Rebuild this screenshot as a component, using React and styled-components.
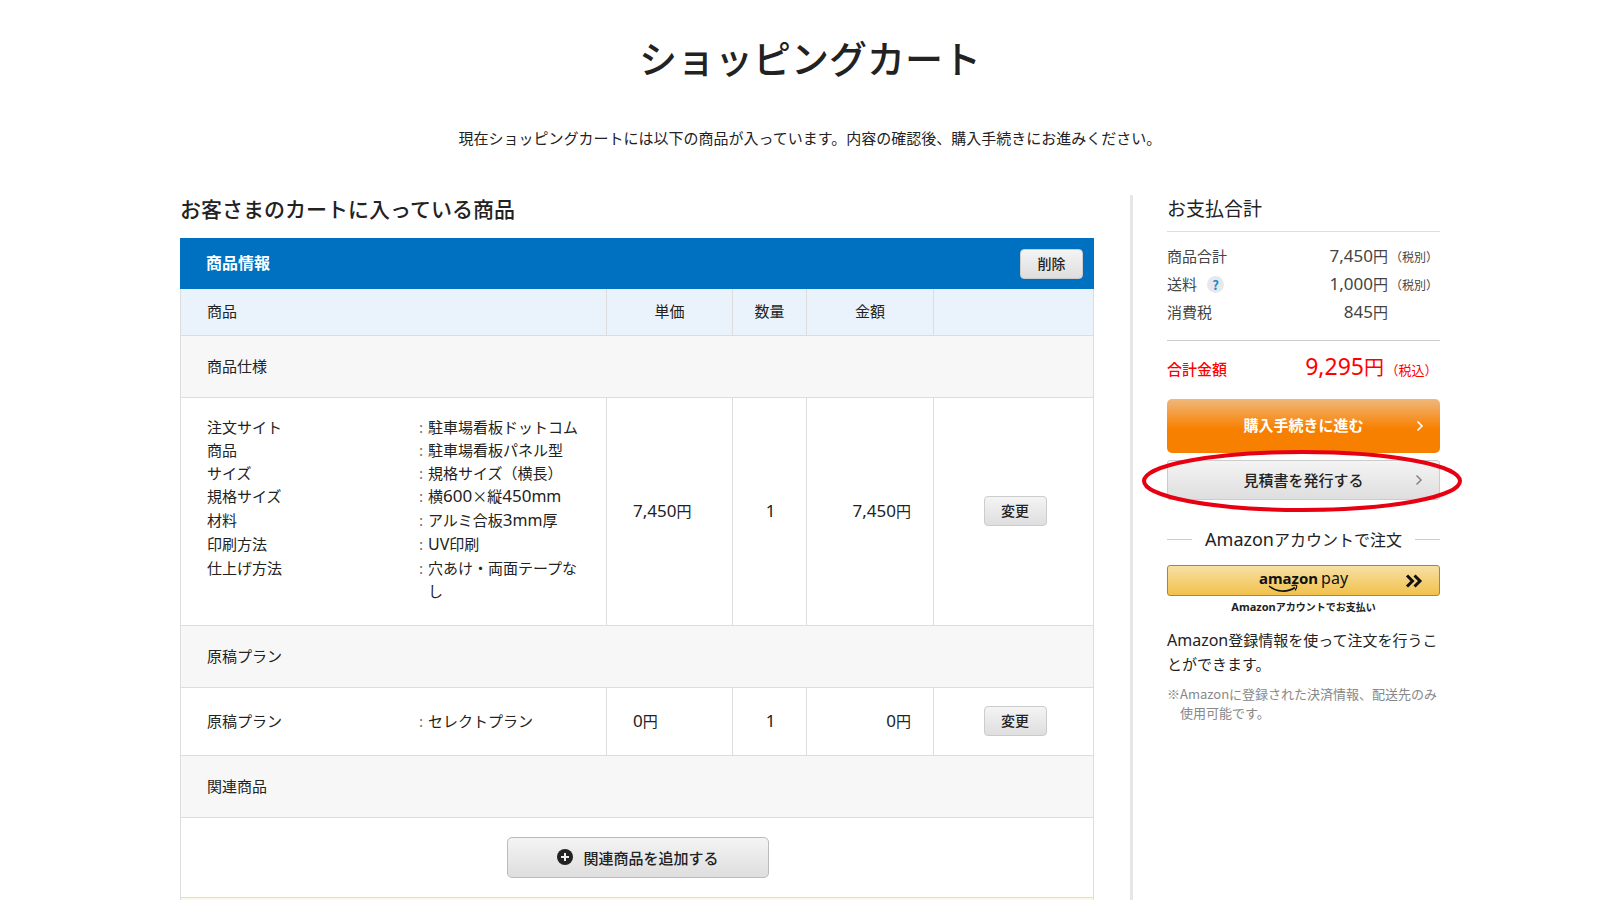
import React from 'react'
import styled, { createGlobalStyle, css } from 'styled-components'

const GlobalStyle = createGlobalStyle`
  * {
    box-sizing: border-box;
  }
  body {
    margin: 0;
    background: #fff;
    color: #222;
    font-family: "Noto Sans CJK JP", "Noto Sans", sans-serif;
    font-size: 15px;
    line-height: 23px;
  }
  h1, h2, h3, p, dl, dd {
    margin: 0;
    font-weight: 400;
  }
  button {
    font-family: inherit;
    cursor: pointer;
  }
`

const Page = styled.div`
  min-height: 100vh;
  display: flex;
  flex-direction: column;
  padding: 30px 160px 0 180px;
`
const Title = styled.h1`
  font-size: 38px;
  line-height: 54px;
  font-weight: 500;
  text-align: center;
`
const Lead = styled.p`
  margin-top: 42px;
  line-height: 24px;
  text-align: center;
`
const Columns = styled.div`
  flex: 1;
  display: flex;
  gap: 36px;
  margin-top: 45px;
`
const Main = styled.main`
  flex: 1;
  display: flex;
  flex-direction: column;
`
const Heading = styled.h2`
  font-size: 21px;
  line-height: 26px;
  font-weight: 500;
  margin-bottom: 17px;
`
const TableBar = styled.div`
  height: 51px;
  display: flex;
  align-items: center;
  justify-content: space-between;
  padding: 0 11px 0 26px;
  background: #0070c0;
`
const BarLabel = styled.strong`
  padding-bottom: 3px;
  color: #fff;
  font-size: 16px;
  font-weight: 700;
`

const Digits = styled.span`
  font-family: "Noto Sans", sans-serif;
  font-size: ${(p) => p.$size || 17}px;
`
const Letters = styled.span`
  font-family: "Noto Sans", sans-serif;
  font-size: ${(p) => p.$size || 16}px;
`

const grey = css`
  border: 1px solid #ccc;
  background: linear-gradient(#f4f4f4, #dedede);
  color: #222;
`
const SmallButton = styled.button`
  ${grey}
  width: 63px;
  height: 30px;
  padding: 0 0 2px;
  border-radius: 4px;
  font-size: 14px;
  font-weight: 500;
`
const AddButton = styled.button`
  ${grey}
  border-color: #bbb;
  display: inline-flex;
  align-items: center;
  justify-content: center;
  gap: 10px;
  width: 262px;
  height: 41px;
  border-radius: 5px;
  font-size: 15px;
  font-weight: 500;
  vertical-align: middle;
`

const Table = styled.table`
  width: 100%;
  table-layout: fixed;
  border-collapse: collapse;
`
const Col = styled.col`
  width: ${(p) => p.$w}px;
`
const Th = styled.th`
  height: 46px;
  padding: 0 0 2px;
  padding-left: ${(p) => (p.$first ? 26 : 0)}px;
  text-align: ${(p) => (p.$first ? 'left' : 'center')};
  font-weight: 400;
  background: #eaf3fb;
  border: 1px solid #ddd;
  border-top: none;
`
const SectionTh = styled.th`
  height: 62px;
  padding: 0 26px 2px;
  text-align: left;
  font-weight: 400;
  background: #f7f7f7;
  border: 1px solid #ddd;
`
const Td = styled.td`
  height: ${(p) => p.$h || 68}px;
  padding: ${(p) => (p.$align === 'center' ? '0 23px 2px 25px' : '0 22px 2px 26px')};
  border: 1px solid #ddd;
  text-align: ${(p) => p.$align || 'left'};
`
const ActionTd = styled(Td)`
  padding: 0 0 0 3px;
  text-align: center;
`
const AddTd = styled(Td)`
  padding: 0 22px 0 24px;
  text-align: center;
`
const Spec = styled.dl`
  display: grid;
  grid-template-columns: 212px 9px 1fr;
  padding-bottom: ${(p) => (p.$long ? 3 : 0)}px;
`
const Colon = styled.span`
  color: #777;
`
const Notice = styled.div`
  flex: 1;
  background: #fcfae6;
  border: 1px solid #ddd;
  border-top: none;
  border-bottom: none;
`

const Aside = styled.aside`
  width: 310px;
  padding-left: 34px;
  border-left: 3px solid #e6e6e6;
`
const AsideHeading = styled.h3`
  padding-bottom: 10px;
  font-size: 19px;
  line-height: 26px;
  border-bottom: 1px solid #ddd;
`
const Sums = styled.dl`
  padding: 10px 0 14px;
  border-bottom: 1px solid #ccc;
`
const SumRow = styled.div`
  display: flex;
  height: 28px;
  line-height: 28px;
  color: #444;
`
const SumLabel = styled.dt`
  flex: 1;
  display: flex;
  align-items: center;
  gap: 10px;
`
const TaxNote = styled.span`
  display: inline-block;
  width: ${(p) => p.$w}px;
  padding-left: 8px;
  font-size: ${(p) => p.$size}px;
  font-feature-settings: "halt";
  text-align: left;
`
const Help = styled.button`
  width: 17px;
  height: 17px;
  padding: 0;
  border: none;
  border-radius: 50%;
  background: #e6e8ea;
  color: #1a8ad4;
  font-size: 13px;
  line-height: 17px;
  font-weight: 700;
`
const Total = styled.div`
  display: flex;
  justify-content: space-between;
  align-items: baseline;
  height: 58px;
  padding-top: 10px;
  line-height: 30px;
  color: #f00;
`
const TotalLabel = styled.span`
  font-weight: 500;
`
const TotalValue = styled.span`
  font-size: 20px;
`

const WideButton = styled.button`
  position: relative;
  display: block;
  width: 100%;
  height: 54px;
  padding: 0 0 4px;
  border: none;
  border-radius: 5px;
  background: linear-gradient(#f0b87c, #f88000 55%);
  color: #fff;
  font-size: 15px;
  font-weight: 700;
`
const EstimateButton = styled(WideButton)`
  ${grey}
  height: 40px;
  padding: 0 0 2px;
  border-radius: 3px;
  font-weight: 500;
`
const Arrow = styled.svg`
  position: absolute;
  right: 16px;
  top: 50%;
  transform: translateY(-50%);
`
const Marked = styled.div`
  position: relative;
  margin-top: 7px;
`
const Ring = styled.svg`
  position: absolute;
  left: -26px;
  top: -11px;
  pointer-events: none;
`
const AmazonHeading = styled.h3`
  display: flex;
  align-items: center;
  gap: 13px;
  margin-top: 25px;
  font-size: 16px;
  line-height: 28px;

  &::before, &::after {
    content: "";
    flex: 1;
    height: 1px;
    background: #ccc;
  }
`
const PayButton = styled(WideButton)`
  height: 31px;
  margin-top: 12px;
  padding: 0;
  border: 1px solid #a88734;
  border-radius: 3px;
  background: linear-gradient(#f8dfa5, #f0c14b);
  color: #111;
`
const PayLogo = styled.span`
  display: flex;
  align-items: baseline;
  justify-content: center;
  gap: 3px;
  height: 29px;
  line-height: 24px;
  font-family: "Noto Sans", sans-serif;
`
const PayBrand = styled.span`
  position: relative;
  font-size: 15px;
  font-weight: 700;
`
const PayWord = styled.span`
  font-size: 16px;
  font-weight: 400;
`
const Smile = styled.svg`
  position: absolute;
  left: 9px;
  top: 18px;
`
const PayCaption = styled.p`
  font-size: 10px;
  line-height: 22px;
  font-weight: 700;
  text-align: center;
`
const AmazonText = styled.p`
  margin-top: 10px;
`
const AmazonNote = styled.p`
  margin-top: 9px;
  padding-left: 13px;
  text-indent: -13px;
  font-size: 13px;
  line-height: 19px;
  color: #888;
`

const specs = [
  ['注文サイト', '駐車場看板ドットコム'],
  ['商品', '駐車場看板パネル型'],
  ['サイズ', '規格サイズ（横長）'],
  ['規格サイズ', '横600×縦450mm'],
  ['材料', 'アルミ合板3mm厚'],
  ['印刷方法', 'UV印刷'],
  ['仕上げ方法', '穴あけ・両面テープなし'],
]

const sums = [
  { label: '商品合計', value: '7,450円', note: '（税別）' },
  { label: '送料', value: '1,000円', note: '（税別）', help: true },
  { label: '消費税', value: '845円' },
]

// digits and latin letters are set a little larger than the kana around them
const Mixed = ({ text, digits, letters }) =>
  text.split(/([0-9,]+|[A-Za-z]+)/).map((part, i) => {
    if (/^[0-9,]+$/.test(part)) return <Digits key={i} $size={digits}>{part}</Digits>
    if (/^[A-Za-z]+$/.test(part)) return <Letters key={i} $size={letters}>{part}</Letters>
    return part
  })

const SpecList = ({ items }) => (
  <Spec $long={items.length > 1}>
    {items.map(([name, value]) => (
      <React.Fragment key={name}>
        <dt>{name}</dt>
        <Colon>:</Colon>
        <dd><Mixed text={value} /></dd>
      </React.Fragment>
    ))}
  </Spec>
)

const Chevron = ({ color }) => (
  <Arrow width="8" height="12" viewBox="0 0 8 12" fill="none" stroke={color} strokeWidth="1.6">
    <path d="M1.5 1.5 L6 6 L1.5 10.5" />
  </Arrow>
)

const CartTable = () => (
  <Table>
    <colgroup>
      <col />
      <Col $w={126} />
      <Col $w={74} />
      <Col $w={127} />
      <Col $w={160} />
    </colgroup>
    <thead>
      <tr>
        <Th $first>商品</Th>
        <Th>単価</Th>
        <Th>数量</Th>
        <Th>金額</Th>
        <Th />
      </tr>
    </thead>
    <tbody>
      <tr>
        <SectionTh colSpan={5}>商品仕様</SectionTh>
      </tr>
      <tr>
        <Td $h={228}><SpecList items={specs} /></Td>
        <Td><Mixed text="7,450円" /></Td>
        <Td $align="center"><Mixed text="1" /></Td>
        <Td $align="right"><Mixed text="7,450円" /></Td>
        <ActionTd><SmallButton>変更</SmallButton></ActionTd>
      </tr>
      <tr>
        <SectionTh colSpan={5}>原稿プラン</SectionTh>
      </tr>
      <tr>
        <Td><SpecList items={[['原稿プラン', 'セレクトプラン']]} /></Td>
        <Td><Mixed text="0円" /></Td>
        <Td $align="center"><Mixed text="1" /></Td>
        <Td $align="right"><Mixed text="0円" /></Td>
        <ActionTd><SmallButton>変更</SmallButton></ActionTd>
      </tr>
      <tr>
        <SectionTh colSpan={5}>関連商品</SectionTh>
      </tr>
      <tr>
        <AddTd colSpan={5} $h={80}>
          <AddButton>
            <svg width="16" height="16" viewBox="0 0 16 16">
              <circle cx="8" cy="8" r="8" fill="#222" />
              <path d="M8 4 V12 M4 8 H12" stroke="#eee" strokeWidth="2" />
            </svg>
            関連商品を追加する
          </AddButton>
        </AddTd>
      </tr>
    </tbody>
  </Table>
)

const Payment = () => (
  <Aside>
    <AsideHeading>お支払合計</AsideHeading>
    <Sums>
      {sums.map((s) => (
        <SumRow key={s.label}>
          <SumLabel>
            {s.label}
            {s.help && <Help aria-label="送料について">?</Help>}
          </SumLabel>
          <dd>
            <Mixed text={s.value} />
            <TaxNote $w={52} $size={12}>{s.note}</TaxNote>
          </dd>
        </SumRow>
      ))}
    </Sums>
    <Total>
      <TotalLabel>合計金額</TotalLabel>
      <TotalValue>
        <Mixed text="9,295円" digits={23} />
        <TaxNote $w={56} $size={13}>（税込）</TaxNote>
      </TotalValue>
    </Total>
    <WideButton>
      購入手続きに進む
      <Chevron color="#fff" />
    </WideButton>
    <Marked>
      <EstimateButton>
        見積書を発行する
        <Chevron color="#888" />
      </EstimateButton>
      <Ring width="322" height="64" viewBox="0 0 322 64">
        <ellipse cx="161" cy="32" rx="158" ry="29" fill="none" stroke="#e60012" strokeWidth="4" />
      </Ring>
    </Marked>
    <AmazonHeading>
      <span><Mixed text="Amazonアカウントで注文" letters={18} /></span>
    </AmazonHeading>
    <PayButton aria-label="amazon pay">
      <PayLogo>
        <PayBrand>
          amazon
          <Smile width="32" height="10" viewBox="0 0 32 10" fill="none" stroke="#111">
            <path d="M1 2 C8 8 19 9 27 3.5" strokeWidth="1.6" />
            <path d="M23.5 1.8 C26 1 28 1 28.6 1.6 C29 2.6 28 5 27 6.4" strokeWidth="1.2" />
          </Smile>
        </PayBrand>
        <PayWord>pay</PayWord>
      </PayLogo>
      <Arrow width="18" height="14" viewBox="0 0 18 14" fill="none" stroke="#111" strokeWidth="3">
        <path d="M2 1.5 L7.5 7 L2 12.5 M9.5 1.5 L15 7 L9.5 12.5" />
      </Arrow>
    </PayButton>
    <PayCaption><Mixed text="Amazonアカウントでお支払い" letters={11} /></PayCaption>
    <AmazonText><Mixed text="Amazon登録情報を使って注文を行うことができます。" /></AmazonText>
    <AmazonNote>※Amazonに登録された決済情報、配送先のみ使用可能です。</AmazonNote>
  </Aside>
)

const App = () => (
  <>
    <GlobalStyle />
    <Page>
      <Title>ショッピングカート</Title>
      <Lead>現在ショッピングカートには以下の商品が入っています。内容の確認後、購入手続きにお進みください。</Lead>
      <Columns>
        <Main>
          <Heading>お客さまのカートに入っている商品</Heading>
          <TableBar>
            <BarLabel>商品情報</BarLabel>
            <SmallButton>削除</SmallButton>
          </TableBar>
          <CartTable />
          <Notice />
        </Main>
        <Payment />
      </Columns>
    </Page>
  </>
)

export default App
